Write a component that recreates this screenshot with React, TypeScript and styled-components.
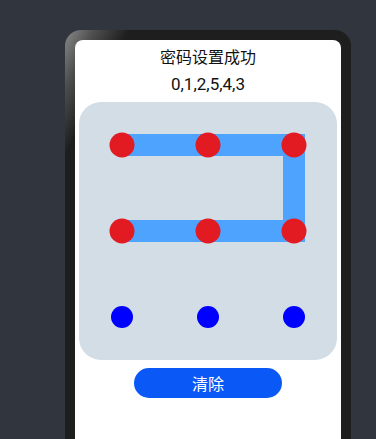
import React from "react";
import styled, { createGlobalStyle } from "styled-components";

const GRID = 3;
const CELL = 86;
const pattern = [0, 1, 2, 5, 4, 3];

const GlobalStyle = createGlobalStyle`
  html, body {
    margin: 0;
    padding: 0;
    background: #31353e;
    overflow: hidden;
  }
  body {
    font-family: Roboto, "Noto Sans CJK SC", sans-serif;
  }
`;

function center(index: number) {
  const col = index % GRID;
  const row = Math.floor(index / GRID);
  return { x: col * CELL + CELL / 2, y: row * CELL + CELL / 2 };
}

function PatternLock({ selected }: { selected: number[] }) {
  const size = GRID * CELL;
  const points = selected
    .map((i) => {
      const p = center(i);
      return `${p.x},${p.y}`;
    })
    .join(" ");

  return (
    <LockPanel>
      <svg width={size} height={size} viewBox={`0 0 ${size} ${size}`}>
        <polyline
          points={points}
          fill="none"
          stroke="#4ea3fe"
          strokeWidth={22}
          strokeLinejoin="miter"
          strokeLinecap="butt"
        />
        {Array.from({ length: GRID * GRID }).map((_, i) => {
          const p = center(i);
          const active = selected.includes(i);
          return (
            <circle
              key={i}
              cx={p.x}
              cy={p.y}
              r={active ? 12.5 : 11}
              fill={active ? "#e21b23" : "#0000ff"}
            />
          );
        })}
      </svg>
    </LockPanel>
  );
}

export default function App() {
  return (
    <>
      <GlobalStyle />
      <Phone>
        <Screen>
          <Title>密码设置成功</Title>
          <Code>{pattern.join(",")}</Code>
          <PatternLock selected={pattern} />
          <ClearButton>清除</ClearButton>
        </Screen>
      </Phone>
    </>
  );
}

// the phone runs off the bottom of the window, so only its top corners show
const Phone = styled.div`
  margin: 30px 0 0 65px;
  width: 286px;
  height: 409px;
  box-sizing: border-box;
  padding: 10px 10px 0;
  border-radius: 16px 16px 0 0;
  background: linear-gradient(
    117deg,
    #8a8a8a 0%,
    #4e4e4e 6%,
    #1e1e1e 13%,
    #1e1e1e 100%
  );
`;

const Screen = styled.div`
  height: 100%;
  background: #ffffff;
  border-radius: 8px 8px 0 0;
  display: flex;
  flex-direction: column;
  align-items: center;
  padding-top: 7px;
  box-sizing: border-box;
`;

const Title = styled.div`
  font-size: 16px;
  line-height: 22px;
  color: #111111;
`;

const Code = styled.div`
  margin-top: 4px;
  font-size: 17px;
  line-height: 22px;
  color: #111111;
`;

const LockPanel = styled.div`
  margin-top: 7px;
  width: 258px;
  height: 258px;
  background: #d3dde6;
  border-radius: 22px;
  svg {
    display: block;
  }
`;

const ClearButton = styled.button`
  margin-top: 8px;
  width: 148px;
  height: 30px;
  border: none;
  border-radius: 15px;
  background: #0a59f7;
  color: #ffffff;
  font-family: Roboto, "Noto Sans CJK SC", sans-serif;
  font-size: 16px;
  padding: 0;
`;
